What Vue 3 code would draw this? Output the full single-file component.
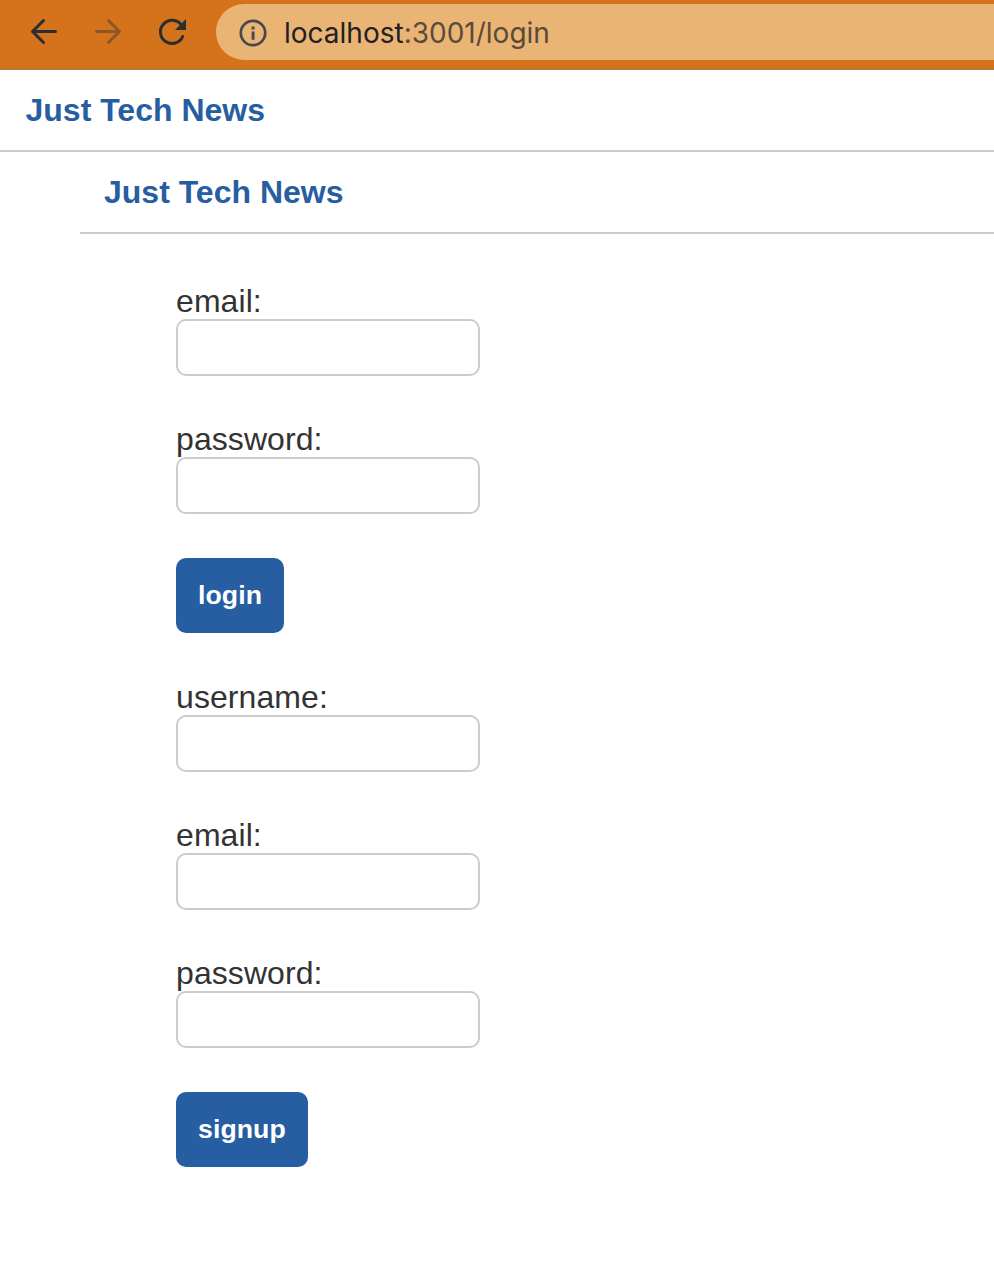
<script setup>
const forms = [
  { action: 'login', fields: ['email', 'password'] },
  { action: 'signup', fields: ['username', 'email', 'password'] },
]
</script>

<template>
  <div class="window">
    <div class="toolbar">
      <svg class="nav" viewBox="0 0 216 68" fill="none" stroke="#2b2e30" stroke-width="3" stroke-linecap="round" stroke-linejoin="round">
        <path d="M55.5 31.5H32.5M43.5 20.5L32.5 31.5L43.5 42.5" />
        <path stroke="#8c5728" d="M96.5 31.5H119.5M108.5 20.5L119.5 31.5L108.5 42.5" />
        <path d="M182.7 36.5A11.6 11.6 0 1 1 181.5 25.2" />
        <path fill="#2b2e30" stroke="none" d="M186 19V30H175Z" />
      </svg>
      <div class="address">
        <svg class="info" viewBox="0 0 28 28">
          <circle cx="14" cy="14" r="12.2" fill="none" stroke="#45484c" stroke-width="2.7" />
          <path fill="#45484c" d="M12.6 7.6h2.9v2.9h-2.9zM12.6 12.6h2.9v8.2h-2.9z" />
        </svg>
        <span class="url"><span class="host">localhost</span>:3001/login</span>
      </div>
    </div>
    <header class="header top"><h1>Just Tech News</h1></header>
    <main>
      <header class="header"><h1>Just Tech News</h1></header>
      <div class="forms">
        <form v-for="form in forms" :key="form.action" @submit.prevent>
          <label v-for="field in form.fields" :key="field" class="field">
            <span>{{ field }}:</span>
            <input :type="field === 'password' ? 'password' : 'text'" />
          </label>
          <button type="submit">{{ form.action }}</button>
        </form>
      </div>
    </main>
  </div>
</template>

<style>
body { margin: 0; background: #fff; }
</style>

<style scoped>
.window {
  min-height: 1274px;
  overflow: hidden;
  background: #fff;
  color: #333;
  font-family: "Liberation Sans", Arial, sans-serif;
}
.toolbar {
  box-sizing: border-box;
  display: flex;
  height: 70px;
  background: #d5731d;
  border-bottom: 2px solid #b97934;
}
.nav { width: 216px; height: 68px; flex: none; }
.address {
  box-sizing: border-box;
  flex: 1;
  height: 56px;
  margin-top: 4px;
  padding: 1px 0 0 22.5px;
  display: flex;
  align-items: center;
  border-radius: 28px 0 0 28px;
  background: #eab574;
}
.info { width: 28px; height: 28px; flex: none; margin-right: 17.5px; }
.url {
  font: 28px/34px Inter, sans-serif;
  color: #5b4a3a;
  white-space: nowrap;
}
.host { color: #202124; }
.header {
  box-sizing: border-box;
  height: 82px;
  padding: 22px 24px;
  border-bottom: 2px solid #ccc;
}
.header.top { padding-left: 25.5px; }
h1 {
  margin: 0;
  font-size: 32px;
  line-height: 36px;
  font-weight: 700;
  color: #265ea1;
}
main { margin-left: 80px; }
.forms { padding: 49px 96px; display: grid; gap: 46px; }
form { display: block; }
.field { display: block; margin-bottom: 45px; line-height: 36px; font-size: 32px; letter-spacing: 0.08px; }
.field:last-of-type { margin-bottom: 44px; }
.field span { display: block; }
input {
  display: block;
  box-sizing: border-box;
  width: 304px;
  height: 57px;
  border: 2px solid #ccc;
  border-radius: 10px;
  background: #fff;
  outline: none;
}
button {
  display: block;
  height: 75px;
  padding: 0 22px;
  border: 0;
  border-radius: 10px;
  background: #265ea1;
  color: #fff;
  font: 700 26.667px "Liberation Sans", Arial, sans-serif;
  letter-spacing: 0.08px;
}
</style>
